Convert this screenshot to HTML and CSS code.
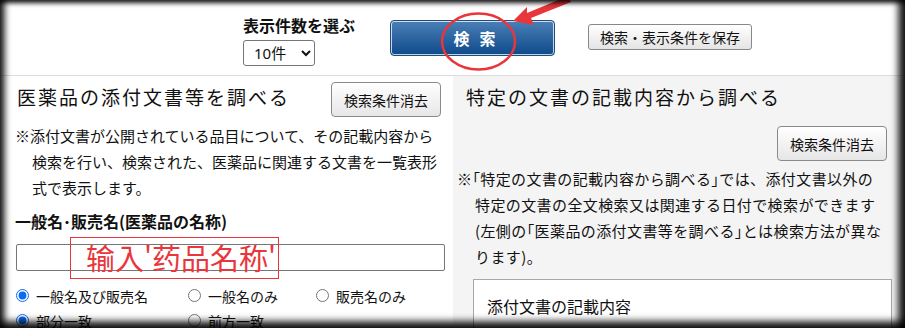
FILE: index.html
```html
<!DOCTYPE html>
<html lang="ja">
<head>
<meta charset="utf-8">
<link rel="stylesheet" href="styles.css">
</head>
<body>
<div class="frame">
  <div class="top">
    <div class="count">
      <div class="count-label">表示件数を選ぶ</div>
      <select class="count-select"><option>10件</option></select>
    </div>
    <button class="search-btn">検索</button>
    <button class="save-btn">検索・表示条件を保存</button>
  </div>
  <div class="main">
    <div class="col-left">
      <div class="head">
        <div class="title">医薬品の添付文書等を調べる</div>
        <button class="clear-btn">検索条件消去</button>
      </div>
      <p class="note note-left">※添付文書が公開されている品目について、その記載内容から<br>検索を行い、検索された、医薬品に関連する文書を一覧表形<br>式で表示します。</p>
      <div class="field-label">一般名･販売名(医薬品の名称)</div>
      <input class="name-input" type="text">
      <div class="radios">
        <label class="radio"><input type="radio" name="a" checked><span>一般名及び販売名</span></label>
        <label class="radio"><input type="radio" name="a"><span>一般名のみ</span></label>
        <label class="radio"><input type="radio" name="a"><span>販売名のみ</span></label>
        <label class="radio"><input type="radio" name="b" checked><span>部分一致</span></label>
        <label class="radio"><input type="radio" name="b"><span>前方一致</span></label>
      </div>
    </div>
    <div class="col-right">
      <div class="title title-right">特定の文書の記載内容から調べる</div>
      <div class="btn-row"><button class="clear-btn">検索条件消去</button></div>
      <p class="note note-right">※<span class="br">「</span>特定の文書の記載内容から調べる<span class="br">」</span>では、添付文書以外の<br>特定の文書の全文検索又は関連する日付で検索ができます<br>(左側の<span class="br">「</span>医薬品の添付文書等を調べる<span class="br">」</span>とは検索方法が異な<br>ります)。</p>
      <div class="content-box">添付文書の記載内容</div>
    </div>
  </div>
  <div class="annot-box">输入'药品名称'</div>
  <svg class="annot" width="905" height="328" viewBox="0 0 905 328">
    <ellipse cx="478.5" cy="41.5" rx="36.5" ry="28" fill="none" stroke="#e8363b" stroke-width="2.5"/>
    <polygon points="513,21 527,7 527,13 568,-4 571,2 531,18 534,25" fill="#e8363b"/>
  </svg>
  <div class="shade"></div>
</div>
</body>
</html>
```

FILE: styles.css
```css
* { box-sizing: border-box; }
html, body { margin: 0; padding: 0; }
body {
  font-family: "Noto Sans CJK JP", "Noto Sans", sans-serif;
  color: #111;
  background: #fff;
}
.frame {
  width: 905px;
  height: 328px;
  position: relative;
  overflow: hidden;
  background: #fff;
}
.top {
  height: 76px;
  border-bottom: 1px solid #dcdcdc;
  display: flex;
  align-items: center;
  padding-left: 243px;
}
.count { width: 117px; margin-right: 30px; margin-top: 4px; }
.count-label {
  font-size: 16px;
  font-weight: bold;
  line-height: 22px;
  white-space: nowrap;
  color: #111;
}
.count-select {
  margin-top: 4px;
  width: 72px;
  height: 26px;
  font-family: "Noto Sans", "Noto Sans CJK JP", sans-serif;
  font-size: 15px;
  border: 1px solid #767676;
  border-radius: 3px;
  background: #fff;
  color: #111;
  padding: 0 2px 0 6px;
}
.search-btn {
  width: 165px;
  height: 36px;
  margin-right: 33px;
  background: linear-gradient(#4b7fb6, #0e4a8b);
  border: 1px solid #1d4c7e;
  border-radius: 4px;
  box-shadow: inset 0 0 0 1px rgba(255,255,255,0.75);
  color: #fff;
  font-family: inherit;
  font-size: 16px;
  font-weight: bold;
  letter-spacing: 10px;
  padding: 0 0 0 14px;
}
.save-btn {
  width: 164px;
  height: 26px;
  margin-top: -2px;
  background: linear-gradient(#ffffff, #e4e4e4);
  border: 1px solid #888;
  border-radius: 3px;
  font-family: inherit;
  font-size: 14px;
  color: #111;
  padding: 0;
}
.main {
  display: grid;
  grid-template-columns: 450px 1fr;
  column-gap: 3px;
  height: 252px;
}
.col-left {
  padding: 6px 9px 0 15px;
  background: #fff;
}
.col-right {
  padding: 8px 13px 0 4px;
  background: #f4f4f4;
}
.head {
  display: flex;
  justify-content: space-between;
  align-items: flex-start;
}
.title {
  font-size: 19px;
  letter-spacing: 2px;
  line-height: 26px;
  margin: 2px 0 0 2px;
  color: #111;
  white-space: nowrap;
}
.title-right { margin: 0 0 0 9px; }
.clear-btn {
  width: 110px;
  height: 35px;
  background: linear-gradient(#ffffff, #e6e6e6);
  border: 1px solid #8a8a8a;
  border-radius: 4px;
  font-family: inherit;
  font-size: 14px;
  color: #111;
  padding: 0;
}
.note {
  margin: 6px 0 0;
  font-size: 15px;
  line-height: 26px;
  white-space: nowrap;
  color: #111;
}
.note-left { padding-left: 17px; text-indent: -17px; }
.note-right {
  margin-top: 5px;
  padding-left: 18px;
  text-indent: -18px;
  letter-spacing: 0.4px;
}
.br { font-feature-settings: "halt"; }
.btn-row {
  margin-top: 16px;
  display: flex;
  justify-content: flex-end;
  padding-right: 5px;
}
.field-label {
  margin-top: 8px;
  font-size: 16px;
  font-weight: bold;
  line-height: 24px;
  color: #111;
}
.name-input {
  display: block;
  margin: 11px 0 0 1px;
  width: 429px;
  height: 27px;
  border: 1px solid #767676;
  border-radius: 2px;
  background: #fff;
}
.radios {
  margin-top: 12px;
  display: grid;
  grid-template-columns: 172px 128px 1fr;
  grid-auto-rows: 25px;
}
.radio {
  display: flex;
  align-items: center;
  gap: 7px;
  font-size: 14px;
  color: #111;
  white-space: nowrap;
}
.radio input {
  margin: 0 0 0 1px;
  width: 13px;
  height: 13px;
  accent-color: #0a6cf5;
}
.content-box {
  margin: 9px 0 0 16px;
  height: 80px;
  background: #fff;
  border: 1px solid #a8a8a8;
  padding: 14px 0 0 13px;
  font-size: 16px;
  line-height: 24px;
  color: #111;
}
.annot-box {
  position: absolute;
  left: 70px;
  top: 237px;
  width: 209px;
  height: 42px;
  border: 1.5px solid #e8363b;
  color: #e8363b;
  font-family: "Noto Sans CJK SC", "Noto Sans", sans-serif;
  font-size: 29px;
  line-height: 38px;
  padding-left: 15px;
  white-space: nowrap;
}
.annot {
  position: absolute;
  left: 0;
  top: 0;
  pointer-events: none;
}
.shade {
  position: absolute;
  inset: 0;
  pointer-events: none;
  box-shadow:
    inset 7px 0 6px -2px rgba(0,0,0,0.8),
    inset 0 5px 5px -2px rgba(0,0,0,0.8),
    inset -9px 0 7px -2px rgba(0,0,0,0.85),
    inset 0 -9px 7px -2px rgba(0,0,0,0.85);
}
```
